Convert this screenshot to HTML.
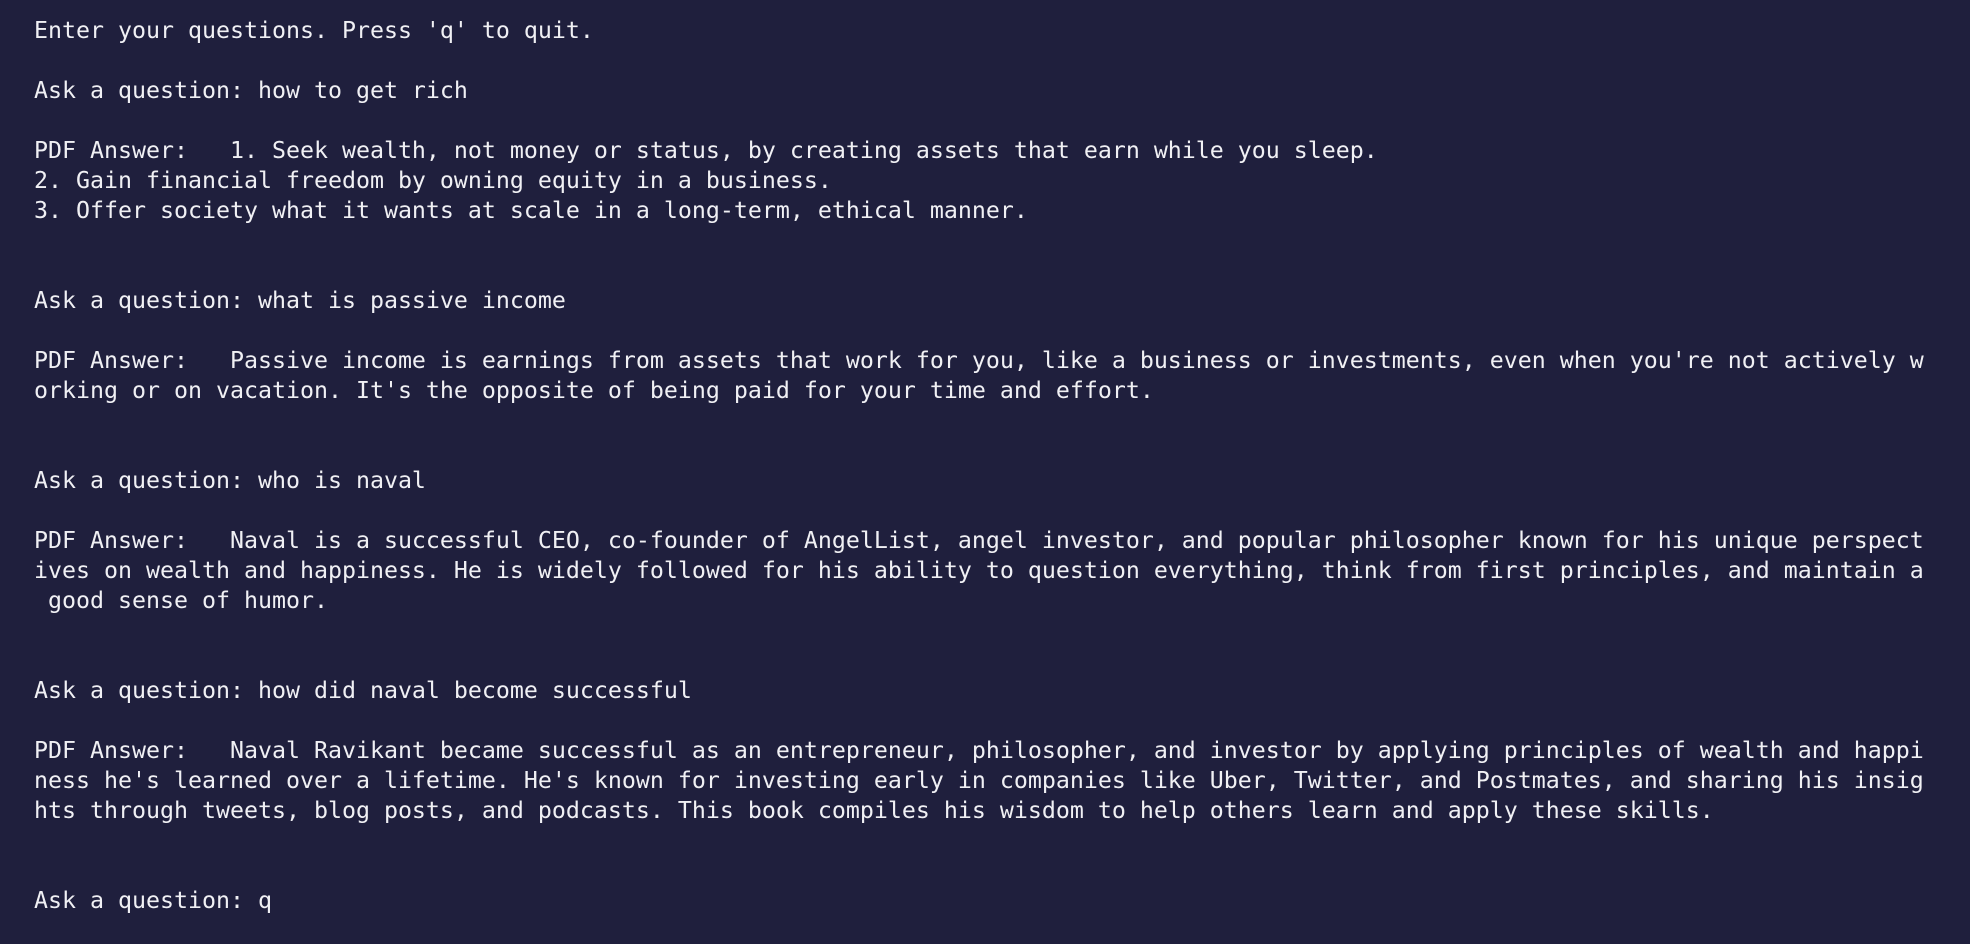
<!DOCTYPE html>
<html><head><meta charset="utf-8"><style>
html,body{margin:0;padding:0;background:#1f1f3d;width:1970px;height:944px;overflow:hidden}
pre{margin:0;padding:16px 0 0 34px;font-family:"DejaVu Sans Mono",monospace;font-size:23.25px;line-height:30px;color:#f0f0f4;white-space:pre}
</style></head><body><pre>Enter your questions. Press 'q' to quit.

Ask a question: how to get rich

PDF Answer:   1. Seek wealth, not money or status, by creating assets that earn while you sleep.
2. Gain financial freedom by owning equity in a business.
3. Offer society what it wants at scale in a long-term, ethical manner.


Ask a question: what is passive income

PDF Answer:   Passive income is earnings from assets that work for you, like a business or investments, even when you're not actively w
orking or on vacation. It's the opposite of being paid for your time and effort.


Ask a question: who is naval

PDF Answer:   Naval is a successful CEO, co-founder of AngelList, angel investor, and popular philosopher known for his unique perspect
ives on wealth and happiness. He is widely followed for his ability to question everything, think from first principles, and maintain a
 good sense of humor.


Ask a question: how did naval become successful

PDF Answer:   Naval Ravikant became successful as an entrepreneur, philosopher, and investor by applying principles of wealth and happi
ness he's learned over a lifetime. He's known for investing early in companies like Uber, Twitter, and Postmates, and sharing his insig
hts through tweets, blog posts, and podcasts. This book compiles his wisdom to help others learn and apply these skills.


Ask a question: q</pre></body></html>
